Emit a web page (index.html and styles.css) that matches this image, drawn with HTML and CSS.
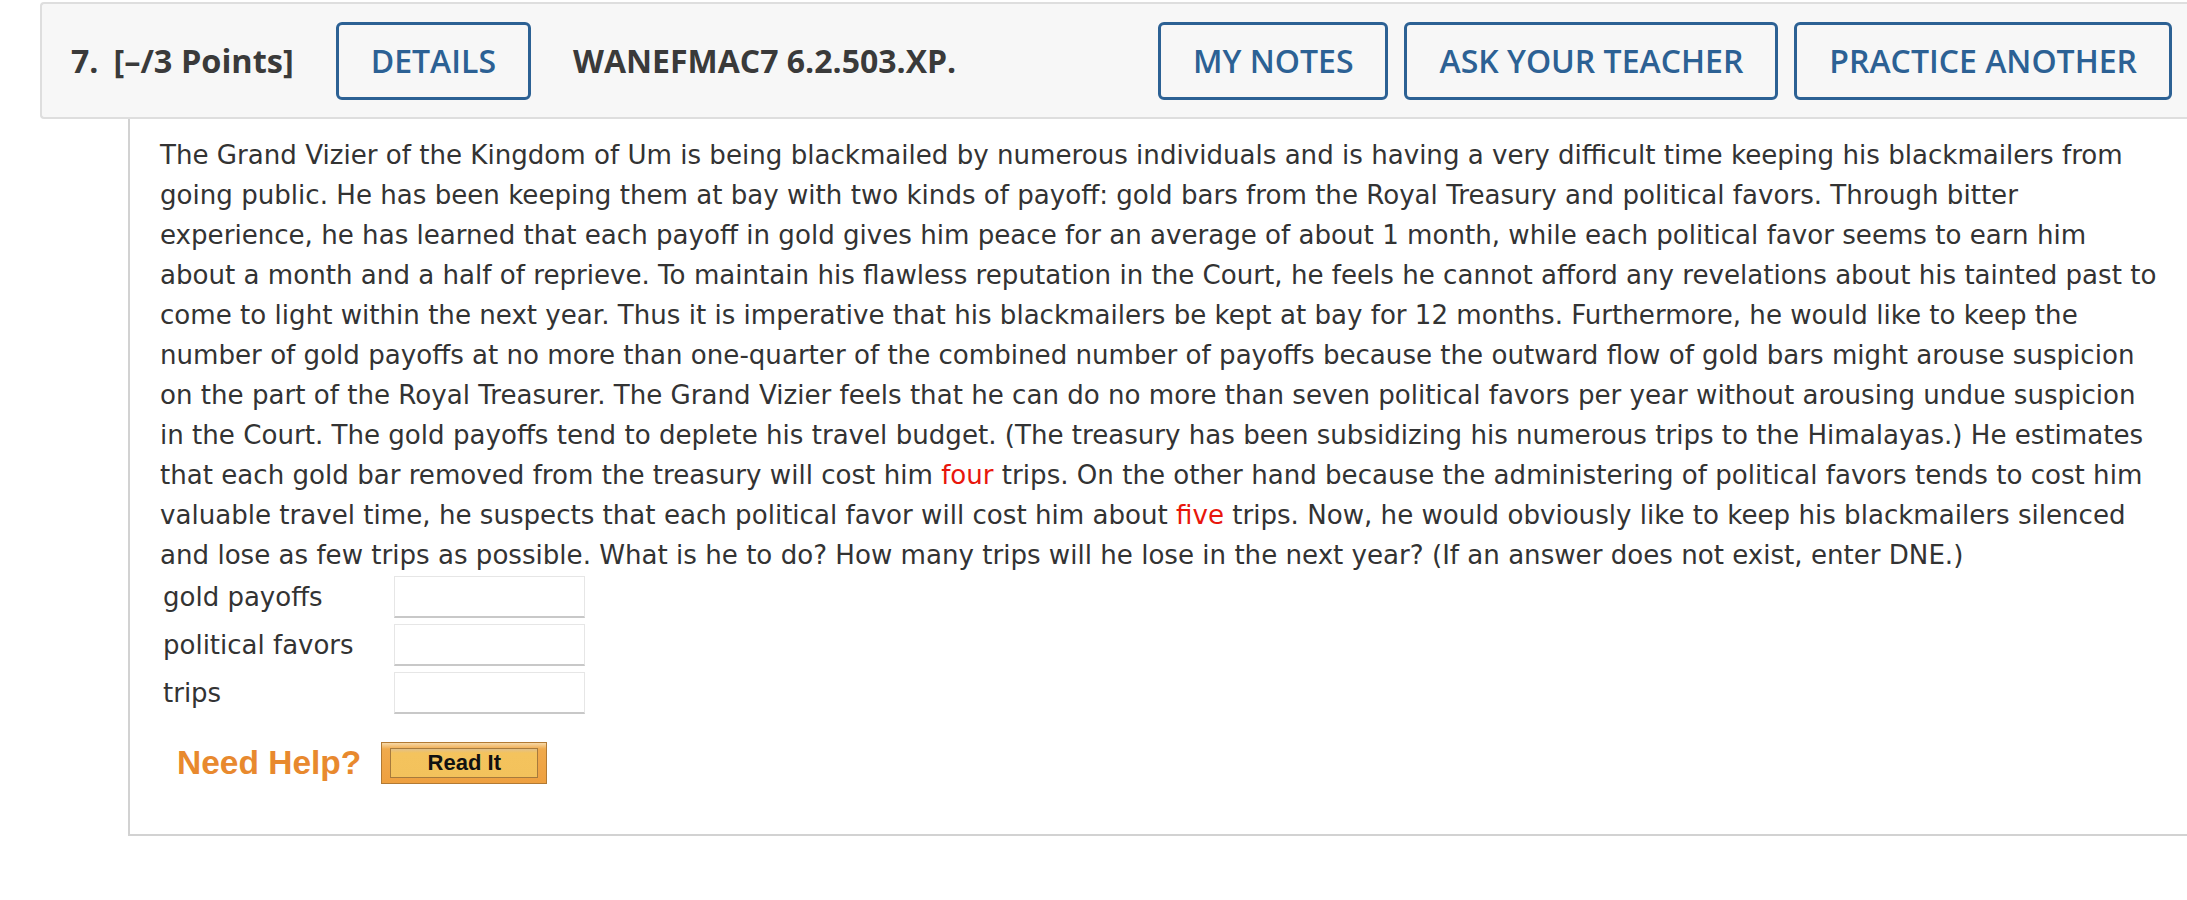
FILE: index.html
```html
<!DOCTYPE html>
<html lang="en">
<head>
<meta charset="utf-8">
<title>Question 7</title>
<link rel="stylesheet" href="styles.css">
</head>
<body>
<div class="question">
  <div class="qhead">
    <span class="qnum">7.</span>
    <span class="qpoints">[–/3 Points]</span>
    <button class="qbtn qdetails">DETAILS</button>
    <span class="qid">WANEFMAC7 6.2.503.XP.</span>
    <div class="qactions">
      <button class="qbtn">MY NOTES</button>
      <button class="qbtn">ASK YOUR TEACHER</button>
      <button class="qbtn">PRACTICE ANOTHER</button>
    </div>
  </div>
  <div class="qbody">
    <p class="qtext">The Grand Vizier of the Kingdom of Um is being blackmailed by numerous individuals and is having a very difficult time keeping his blackmailers from<br>going public. He has been keeping them at bay with two kinds of payoff: gold bars from the Royal Treasury and political favors. Through bitter<br>experience, he has learned that each payoff in gold gives him peace for an average of about 1 month, while each political favor seems to earn him<br>about a month and a half of reprieve. To maintain his flawless reputation in the Court, he feels he cannot afford any revelations about his tainted past to<br>come to light within the next year. Thus it is imperative that his blackmailers be kept at bay for 12 months. Furthermore, he would like to keep the<br>number of gold payoffs at no more than one-quarter of the combined number of payoffs because the outward flow of gold bars might arouse suspicion<br>on the part of the Royal Treasurer. The Grand Vizier feels that he can do no more than seven political favors per year without arousing undue suspicion<br>in the Court. The gold payoffs tend to deplete his travel budget. (The treasury has been subsidizing his numerous trips to the Himalayas.) He estimates<br>that each gold bar removed from the treasury will cost him <span class="red">four</span> trips. On the other hand because the administering of political favors tends to cost him<br>valuable travel time, he suspects that each political favor will cost him about <span class="red">five</span> trips. Now, he would obviously like to keep his blackmailers silenced<br>and lose as few trips as possible. What is he to do? How many trips will he lose in the next year? (If an answer does not exist, enter DNE.)</p>
    <div class="answers">
      <label class="alabel">gold payoffs</label><input class="abox" type="text">
      <label class="alabel">political favors</label><input class="abox" type="text">
      <label class="alabel">trips</label><input class="abox" type="text">
    </div>
    <div class="help">
      <span class="needhelp">Need Help?</span>
      <span class="readit"><span class="readit-inner">Read It</span></span>
    </div>
  </div>
</div>
</body>
</html>
```

FILE: styles.css
```css
html, body {
  margin: 0;
  padding: 0;
  background: #ffffff;
  overflow: hidden;
}

.question {
  padding-top: 2px;
}

.qhead {
  display: flex;
  align-items: center;
  margin-left: 40px;
  height: 113px;
  padding: 0 15px 0 29px;
  background: #f7f7f7;
  border: 2px solid #dedede;
  border-right: 0;
  border-radius: 4px 0 0 4px;
  font-family: "Open Sans", sans-serif;
  color: #3a3a3a;
}

.qnum {
  font-size: 32px;
  font-weight: 700;
  margin-right: 15px;
}

.qpoints {
  font-size: 32.5px;
  font-weight: 700;
  margin-right: 42px;
}

.qid {
  font-size: 32px;
  font-weight: 700;
  margin-left: 42px;
  margin-right: auto;
}

.qactions {
  display: flex;
  gap: 16px;
}

.qbtn {
  font-family: "Open Sans", sans-serif;
  font-size: 32px;
  font-weight: 600;
  line-height: 44px;
  color: #2c6194;
  background: transparent;
  border: 3px solid #2c6194;
  border-radius: 6px;
  padding: 14px 32px;
  margin: 0;
  white-space: nowrap;
}

.qbody {
  margin-left: 128px;
  border-left: 2px solid #d2d2d2;
  border-bottom: 2px solid #d2d2d2;
  padding: 16px 0 50px 30px;
  font-family: Verdana, "DejaVu Sans", sans-serif;
  color: #333333;
}

.qtext {
  margin: 0;
  font-size: 26.1px;
  line-height: 40px;
  white-space: nowrap;
}

.red {
  color: #e8160c;
}

.answers {
  display: grid;
  grid-template-columns: 231px 191px;
  row-gap: 6px;
  align-items: center;
  margin-top: 1px;
  padding-left: 3px;
}

.alabel {
  font-size: 26px;
}

.abox {
  box-sizing: border-box;
  width: 191px;
  height: 42px;
  margin: 0;
  border: 1px solid #e6e6e6;
  border-bottom: 2px solid #c8c8c8;
  background: #ffffff;
  padding: 0 6px;
  font-size: 20px;
}

.help {
  display: flex;
  align-items: center;
  margin-top: 28px;
  padding-left: 17px;
  gap: 20px;
}

.needhelp {
  font-family: "Liberation Sans", Arial, sans-serif;
  font-weight: 700;
  font-size: 33.5px;
  color: #e8892e;
}

.readit {
  box-sizing: border-box;
  display: flex;
  align-items: center;
  justify-content: center;
  width: 166px;
  height: 42px;
  border: 1px solid #b27a34;
  background: linear-gradient(#f7d9a8 0, #f0aa4c 6px, #eea040 100%);
}

.readit-inner {
  box-sizing: border-box;
  display: flex;
  align-items: center;
  justify-content: center;
  width: 148px;
  height: 30px;
  border: 1px solid #a77a3c;
  background: linear-gradient(#e2c08a 0, #f4c35d 4px, #f3c25c 100%);
  font-family: "Liberation Sans", Arial, sans-serif;
  font-weight: 700;
  font-size: 22px;
  color: #111111;
}
```
